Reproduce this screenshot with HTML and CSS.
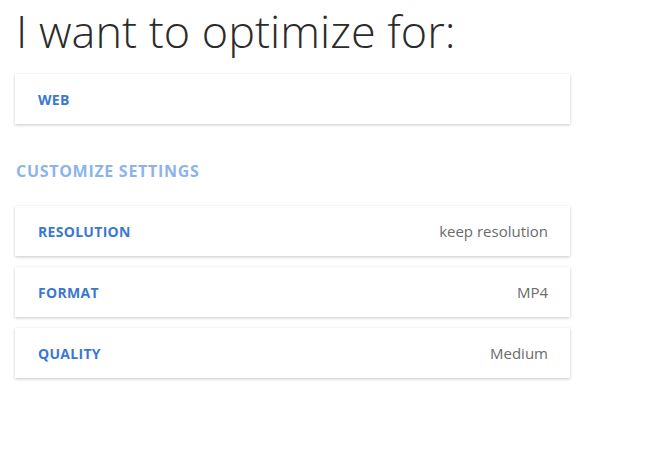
FILE: index.html
```html
<!DOCTYPE html>
<html>
<head>
<meta charset="utf-8">
<link rel="stylesheet" href="styles.css">
</head>
<body>
<div class="page">
  <h1 class="title">I want to optimize for:</h1>
  <div class="card">
    <span class="label">WEB</span>
  </div>
  <h2 class="section">CUSTOMIZE SETTINGS</h2>
  <div class="list">
    <div class="card">
      <span class="label">RESOLUTION</span>
      <span class="value">keep resolution</span>
    </div>
    <div class="card">
      <span class="label">FORMAT</span>
      <span class="value">MP4</span>
    </div>
    <div class="card">
      <span class="label">QUALITY</span>
      <span class="value">Medium</span>
    </div>
  </div>
</div>
</body>
</html>
```

FILE: styles.css
```css
html, body {
  margin: 0;
  padding: 0;
  background: #ffffff;
}
body {
  font-family: "Open Sans", "Liberation Sans", sans-serif;
  color: #333;
}
.page {
  width: 555px;
  padding: 0 15px 40px;
}
.title {
  margin: 0;
  padding: 0 0 0 1px;
  font-size: 45px;
  font-weight: 300;
  line-height: 62px;
  color: #2b2b2b;
}
.card {
  display: flex;
  align-items: center;
  justify-content: space-between;
  height: 50px;
  padding: 0 22px 0 23px;
  background: #fff;
  box-shadow: 0 1px 3px rgba(0, 0, 0, 0.22);
  box-sizing: border-box;
}
.title + .card {
  margin-top: 12px;
}
.label {
  font-size: 14px;
  font-weight: 700;
  letter-spacing: 0.3px;
  color: #3b78d0;
}
.value {
  font-size: 15px;
  color: #6b6b6b;
}
.section {
  margin: 37px 0 0 1px;
  font-size: 16px;
  font-weight: 700;
  letter-spacing: 0.7px;
  color: #8cb4ec;
  line-height: 20px;
}
.list {
  display: flex;
  flex-direction: column;
  gap: 11px;
  margin-top: 25px;
}
```
